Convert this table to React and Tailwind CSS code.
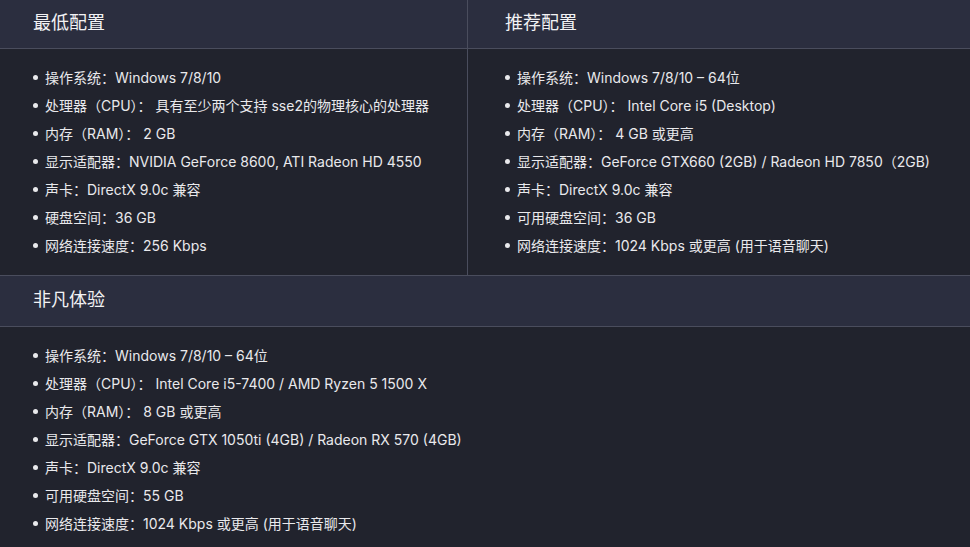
const MIN_SPEC = [
  '操作系统：Windows 7/8/10',
  '处理器（CPU）： 具有至少两个支持 sse2的物理核心的处理器',
  '内存（RAM）： 2 GB',
  '显示适配器：NVIDIA GeForce 8600, ATI Radeon HD 4550',
  '声卡：DirectX 9.0c 兼容',
  '硬盘空间：36 GB',
  '网络连接速度：256 Kbps',
]

const REC_SPEC = [
  '操作系统：Windows 7/8/10 – 64位',
  '处理器（CPU）： Intel Core i5 (Desktop)',
  '内存（RAM）： 4 GB 或更高',
  '显示适配器：GeForce GTX660 (2GB) / Radeon HD 7850（2GB)',
  '声卡：DirectX 9.0c 兼容',
  '可用硬盘空间：36 GB',
  '网络连接速度：1024 Kbps 或更高 (用于语音聊天)',
]

const ULTRA_SPEC = [
  '操作系统：Windows 7/8/10 – 64位',
  '处理器（CPU）： Intel Core i5-7400 / AMD Ryzen 5 1500 X',
  '内存（RAM）： 8 GB 或更高',
  '显示适配器：GeForce GTX 1050ti (4GB) / Radeon RX 570 (4GB)',
  '声卡：DirectX 9.0c 兼容',
  '可用硬盘空间：55 GB',
  '网络连接速度：1024 Kbps 或更高 (用于语音聊天)',
]

function SpecList({ items, pad }) {
  return (
    <ul className={`pt-[14px] pb-[16px] ${pad}`}>
      {items.map((text, i) => (
        <li key={i} className="flex items-center h-[28px] text-[14px] text-[#e9e9ec]">
          <span className="w-[5px] h-[5px] rounded-full bg-[#e9e9ec] mr-[7px] shrink-0" />
          <span className="whitespace-nowrap">{text}</span>
        </li>
      ))}
    </ul>
  )
}

function SpecBlock({ title, items, pad, head = 'h-[49px]' }) {
  return (
    <div>
      <div className={`${head} bg-[#2b2e3f] border-b border-[#4a4d5d] flex items-center ${pad}`}>
        <h3 className="text-[18px] text-[#f2f2f4] leading-none pb-[3px]">{title}</h3>
      </div>
      <SpecList items={items} pad={pad} />
    </div>
  )
}

export default function App() {
  return (
    <div
      className="w-[970px] h-[547px] overflow-hidden bg-[#21232d]"
      style={{ fontFamily: 'Inter, "Noto Sans CJK SC", sans-serif' }}
    >
      {/* Minimum & Recommended */}
      <div className="grid grid-cols-[468px_1fr] border-b border-[#4a4d5d]">
        <div className="border-r border-[#4a4d5d]">
          <SpecBlock title="最低配置" items={MIN_SPEC} pad="pl-[33px]" />
        </div>
        <SpecBlock title="推荐配置" items={REC_SPEC} pad="pl-[37px]" />
      </div>

      {/* Ultra */}
      <SpecBlock title="非凡体验" items={ULTRA_SPEC} pad="pl-[33px]" head="h-[51px]" />
    </div>
  )
}
